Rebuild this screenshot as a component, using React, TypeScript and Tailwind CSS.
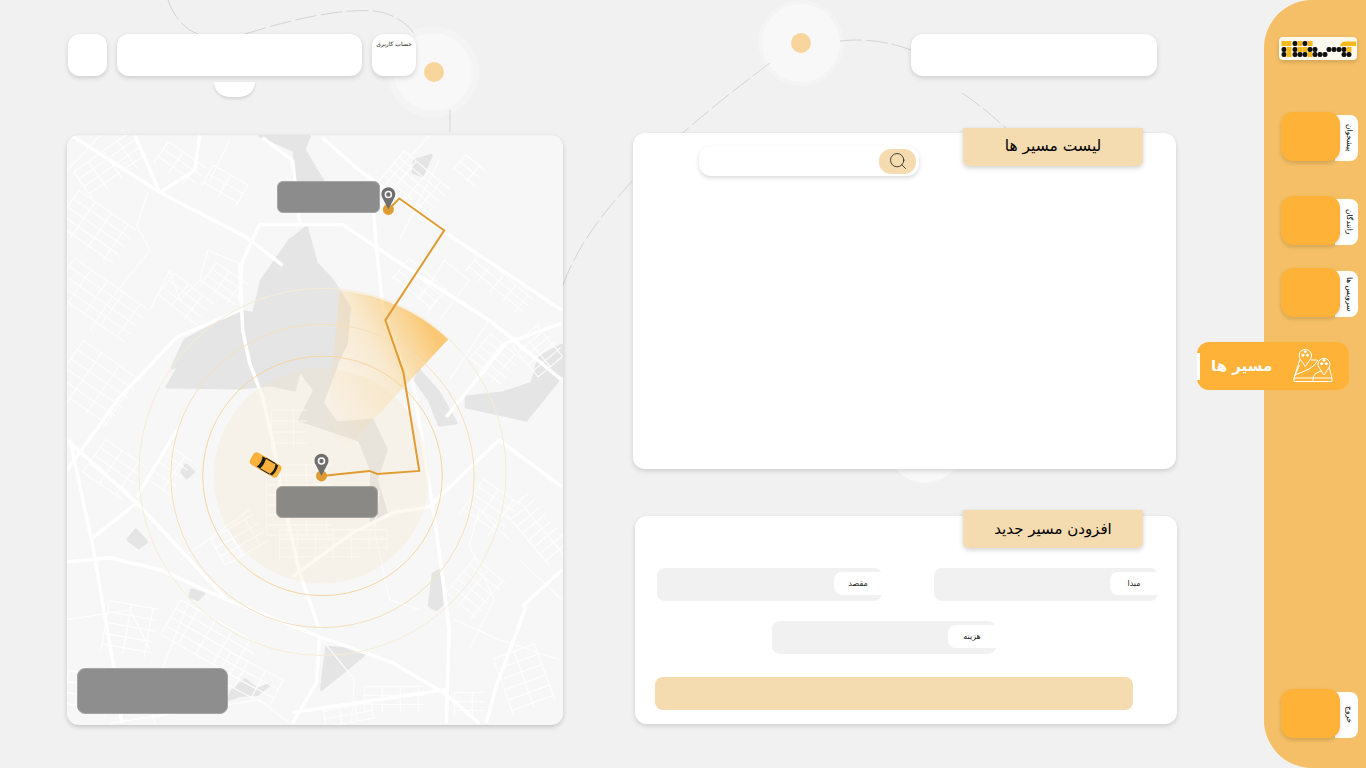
import React from "react";
import { Search } from "lucide-react";

const mainRoads = [
  "M67 132 L160 192 L247 237 L283 265",
  "M323 137 L360 170 L443 230 L563 310",
  "M377 247 L427 280 L490 320 L563 380",
  "M240 300 L242 263 L260 224 L343 224 L377 247",
  "M263 137 L293 160 L300 224",
  "M373 197 L377 247 L383 303 L402 360 L413 380 L423 440 L437 530 L450 630 L447 724",
  "M240 263 L243 330 L250 363 L263 397 L273 440 L283 497 L300 573 L320 630",
  "M240 310 L177 337 L120 397 L67 470",
  "M67 562 L110 558 L160 570 L227 600 L320 637 L393 663 L447 695 L480 724",
  "M70 440 L93 547 L113 663 L122 724",
  "M293 577 L353 533 L393 513 L430 507 L500 440 L563 487",
  "M527 607 L497 687 L487 724",
  "M523 607 L563 570",
  "M320 637 L317 683 L293 724",
  "M67 440 L137 503 L227 600",
  "M137 503 L90 540",
  "M137 497 L177 430",
  "M293 713 L447 690",
  "M447 417 L507 343 L563 323",
  "M160 192 L135 135",
  "M160 192 L195 170 L200 135",
];

const minorRoads = [
  "M100 135 L67 170",
  "M210 180 L230 140",
  "M148 192 L137 225 L150 250 L110 300 L90 330",
  "M240 263 L208 250 L200 280 L230 300",
  "M200 280 L180 300 L170 270 L150 310",
  "M430 135 L380 190",
  "M440 160 L400 240",
  "M450 380 L490 320 L520 340",
  "M420 300 L445 260 L470 280 L440 320",
  "M510 540 L480 510 L470 545 L495 600 L470 650",
  "M563 600 L520 560",
  "M190 600 L150 700 L155 724",
  "M380 490 L375 530 L390 600 L420 610",
  "M180 560 L250 510",
  "M67 620 L130 610 L150 650",
  "M320 637 L355 680 L352 724",
  "M560 660 L500 640 L455 620",
  "M110 724 L260 700 L290 724",
];

// x, y, angle, width, height, step
const streetBlocks: number[][] = [
  [112, 165, -35, 70, 34, 9],
  [180, 165, 35, 46, 26, 9],
  [95, 228, 35, 70, 44, 10],
  [100, 300, 35, 90, 40, 10],
  [185, 300, 38, 50, 30, 9],
  [95, 385, 35, 70, 60, 11],
  [225, 285, 35, 40, 28, 8],
  [225, 185, 30, 40, 24, 10],
  [415, 185, 40, 60, 40, 8],
  [420, 285, 40, 50, 28, 8],
  [500, 285, 40, 70, 22, 8],
  [495, 360, 40, 40, 36, 8],
  [540, 350, -40, 36, 40, 8],
  [470, 170, 40, 26, 20, 9],
  [300, 500, 0, 66, 70, 10],
  [290, 430, 0, 36, 40, 11],
  [320, 545, 0, 80, 30, 9],
  [240, 540, -30, 50, 30, 10],
  [115, 470, 35, 50, 40, 10],
  [170, 470, 35, 30, 40, 10],
  [210, 640, 30, 90, 40, 10],
  [130, 630, 10, 50, 50, 11],
  [250, 680, 28, 60, 30, 10],
  [395, 700, 0, 60, 26, 9],
  [370, 540, 0, 36, 20, 9],
  [490, 510, 35, 44, 44, 9],
  [540, 530, -40, 30, 70, 9],
  [475, 590, 40, 40, 50, 9],
  [525, 680, -20, 44, 60, 11],
  [470, 705, 0, 30, 24, 9],
  [350, 715, -10, 50, 16, 8],
  [90, 695, 10, 50, 40, 11],
];

const water = [
  "M307 227 L317 263 L333 280 L350 307 L347 343 L338 362 L323 403 L337 423 L373 420 L387 450 L377 480 L387 513 L372 522 L372 470 L360 440 L330 430 L300 420 L315 390 L300 370 L295 390 L272 385 L240 388 L167 387 L180 365 L172 368 L185 340 L240 311 L254 313 L262 280 L290 240 Z",
  "M260 135 L295 150 L296 170 L310 135 Z",
  "M296 135 L325 183 L300 205 L294 175 Z",
  "M420 370 L440 393 L457 423 L440 425 L430 400 L416 380 Z",
  "M467 407 L527 420 L557 383 L563 375 L563 345 L540 357 L533 383 L503 393 L467 397 Z",
  "M327 648 L358 650 L365 655 L322 690 Z",
  "M232 692 L245 680 L258 690 L270 685 L258 695 L240 696 L228 700 Z",
  "M415 160 L432 155 L423 175 L414 172 Z",
  "M430 606 L437 610 L443 605 L441 570 L434 574 Z",
  "M136 530 L147 542 L139 548 L128 540 Z",
  "M192 590 L204 594 L198 600 L190 597 Z",
  "M186 465 L194 472 L187 478 L182 472 Z",
];

const logoDots: [number, number, string][] = [
  [5, 6.5, "#f5b819"], [10, 6.5, "#f5b819"], [16, 6.5, "#111"], [21, 6.5, "#f5b819"], [26, 6.5, "#111"], [31, 6.5, "#f5b819"],
  [5, 12.5, "#111"], [10, 12.5, "#f5b819"], [16, 12.5, "#111"], [21, 12.5, "#f5b819"], [26, 12.5, "#f5b819"], [31, 12.5, "#111"],
  [36, 12.5, "#111"], [50, 12.5, "#111"], [55, 12.5, "#111"], [60, 12.5, "#111"], [65, 12.5, "#111"], [70, 12.5, "#f5b819"],
  [5, 17.5, "#111"], [10, 17.5, "#f5b819"], [16, 17.5, "#111"], [21, 17.5, "#111"], [26, 17.5, "#111"], [31, 17.5, "#f5b819"],
  [36, 17.5, "#111"], [41, 17.5, "#111"], [46, 17.5, "#111"], [65, 17.5, "#111"], [70, 17.5, "#111"],
];

const Logo = () => (
  <svg width="78" height="23" viewBox="0 0 78 23">
    {logoDots.map(([x, y, c], i) => (
      <rect key={i} x={x - 2.5} y={y - 2.5} width="5" height="5" rx={c === "#111" ? 2.2 : 0.6} fill={c} />
    ))}
    <path d="M61 9 Q62 4.500 66 4.500 L77 4.500 L77 9 Z" fill="#f5b819" />
  </svg>
);

const RouteIcon = () => (
  <svg width="40" height="36" viewBox="0 0 40 36" fill="none" stroke="#fff" strokeWidth="1">
    <path d="M1 30 L7 11 M6.500 17 L1 30 M39 30 L35 15 M18 12 L24 12 M1 30 H39 V33.500 H1 Z" />
    <path d="M1.500 27 Q10 24 16 21 Q22 18 25 12" />
    <path d="M20 33 V29 Q21 25 28 23" />
    <path d="M12.300 18.500 L7.500 11.500 A6.200 6.200 0 1 1 17.100 11.500 Z" fill="#ffb238" />
    <path d="M31 27 L26.300 20 A6 6 0 1 1 35.700 20 Z" fill="#ffb238" />
    <path d="M12.300 5 a1.300 1.300 0 1 1 .01 0 M10 8.500 a1.300 1.300 0 1 1 .01 0 M14.600 8.500 a1.300 1.300 0 1 1 .01 0" fill="#fff" strokeWidth=".5" />
    <path d="M31 13.500 a1.300 1.300 0 1 1 .01 0 M28.700 17 a1.300 1.300 0 1 1 .01 0 M33.300 17 a1.300 1.300 0 1 1 .01 0" fill="#fff" strokeWidth=".5" />
  </svg>
);

const Pin = ({ x, y }: { x: number; y: number }) => (
  <g>
    <circle cx={x} cy={y + 12} r="5.500" fill="#e09c33" />
    <path
      d={`M${x} ${y + 12} L${x - 5.600} ${y + 1} A7 7 0 1 1 ${x + 5.600} ${y + 1} Z`}
      fill="#6f6f6f"
    />
    <circle cx={x} cy={y - 3} r="3" fill="none" stroke="#fff" strokeWidth="1.500" />
  </g>
);

const MapDrawing = () => (
  <svg className="w-full h-full block" viewBox="67 135 497 590">
    <defs>
      <linearGradient id="sweep" gradientUnits="userSpaceOnUse" x1="320" y1="410" x2="440" y2="345">
        <stop offset="0" stopColor="#fbd38c" stopOpacity="0" />
        <stop offset=".55" stopColor="#fbd38c" stopOpacity=".35" />
        <stop offset="1" stopColor="#fac66e" stopOpacity=".95" />
      </linearGradient>
    </defs>
    <rect x="67" y="135" width="497" height="590" fill="#f7f7f7" />
    <g fill="#e5e5e5" stroke="#e5e5e5" strokeWidth="3" strokeLinejoin="round">
      {water.map((d) => (
        <path key={d} d={d} />
      ))}
    </g>
    <g fill="none" stroke="#fff" strokeWidth="1.200" opacity=".85">
      {minorRoads.map((d) => (
        <path key={d} d={d} />
      ))}
      {streetBlocks.map(([x, y, a, w, h, s], i) => (
        <g key={i} transform={`translate(${x} ${y}) rotate(${a})`}>
          {Array.from({ length: Math.floor(h / s) + 1 }).map((_, r) => (
            <line key={r} x1={-w / 2} x2={w / 2} y1={-h / 2 + r * s} y2={-h / 2 + r * s} />
          ))}
          {Array.from({ length: Math.floor(w / (s * 2)) + 1 }).map((_, c) => (
            <line key={c} y1={-h / 2} y2={h / 2} x1={-w / 2 + c * s * 2} x2={-w / 2 + c * s * 2} />
          ))}
        </g>
      ))}
    </g>
    <g fill="none" stroke="#fff" strokeWidth="3.500" strokeLinejoin="round">
      {mainRoads.map((d) => (
        <path key={d} d={d} />
      ))}
    </g>
    <circle cx="322" cy="476" r="108" fill="#f8dfb5" fillOpacity=".2" />
    <path d="M322 476 L449 339 A187 187 0 0 0 340 290 Z" fill="url(#sweep)" />
    <circle cx="323" cy="476" r="120" fill="none" stroke="#f6d5a2" strokeWidth="1" />
    <circle cx="323" cy="476" r="152" fill="none" stroke="#f6dfbb" strokeWidth="1" />
    <circle cx="323" cy="472" r="184" fill="none" stroke="#f7ebd6" strokeWidth="1" />
    <polyline
      points="389,209 400,198 445,230 386,320 404,372 420,471 378,474 370,471 322,476"
      fill="none"
      stroke="#e09c33"
      strokeWidth="2"
    />
    <Pin x={389} y={197} />
    <Pin x={322} y={464} />
    <g transform="translate(266 465) rotate(30)">
      <rect x="-16" y="-7" width="32" height="14" rx="4" fill="#f7b13c" />
      <path d="M-7 -6 Q-4 0 -7 6 L-3 6 Q-1 0 -3 -6 Z M8 -6 Q11 0 8 6 L11 6 Q13 0 11 -6 Z" fill="#1c1c1c" />
      <path d="M-3 -6 H8 M-3 6 H8" stroke="#1c1c1c" strokeWidth="1" />
    </g>
  </svg>
);

const Backdrop = () => (
  <svg className="absolute inset-0" width="1366" height="768" fill="none">
    <circle cx="433" cy="72" r="46" fill="#f4f4f4" />
    <circle cx="433" cy="72" r="39" fill="#f8f8f8" />
    <circle cx="434" cy="72" r="10" fill="#f7d59d" />
    <circle cx="801" cy="43" r="43" fill="#f4f4f4" />
    <circle cx="801" cy="43" r="39" fill="#f8f8f8" />
    <circle cx="801" cy="43" r="10" fill="#f7d59d" />
    <circle cx="925" cy="445" r="38" fill="#f8f8f8" />
    <g stroke="#d4d4d4" strokeWidth="1" strokeDasharray="22 4">
      <path d="M168 0 C174 18 186 30 198 34" />
      <path d="M245 34 C290 20 340 8 375 11 C395 14 408 24 416 36" />
      <path d="M450 110 V135" />
      <path d="M563 285 C585 225 640 160 770 63" />
      <path d="M840 41 C865 38 890 42 911 50" />
      <path d="M962 93 C980 105 995 118 1008 130" />
    </g>
  </svg>
);

const NavItem = ({ label, className = "" }: { label: string; className?: string }) => (
  <div className={`flex h-[49px] w-[77px] ${className}`}>
    <div className="relative z-10 w-[59px] h-full rounded-xl bg-[#ffb238] shadow-[0_2px_4px_rgba(0,0,0,0.15)]" />
    <div className="-ml-[5px] mt-[3px] h-[46px] w-[23px] rounded-r-lg bg-white flex items-center justify-center pl-[5px]">
      <span className="[writing-mode:vertical-rl] text-[7.500px] leading-none text-black whitespace-nowrap">{label}</span>
    </div>
  </div>
);

const Sidebar = () => (
  <aside className="relative w-[102px] h-[768px] shrink-0 rounded-l-[48px] bg-[#f4bf66] flex flex-col pl-[15px] pt-[37px] pb-[30px]">
    <div className="h-[23px] w-[78px] rounded bg-[#fdf9ef] shadow-[0_2px_4px_rgba(0,0,0,0.15)]">
      <Logo />
    </div>
    <NavItem label="پیشخوان" className="mt-[52px] ml-[2px]" />
    <NavItem label="رانندگان" className="mt-[35px] ml-[2px]" />
    <NavItem label="سرویس ها" className="mt-[23px] ml-[2px]" />
    <div className="relative -ml-[82px] mt-[25px] h-[48px] w-[152px] rounded-xl bg-[#ffb238] flex items-center pl-[14px] pr-[16px] justify-between">
      <span className="absolute left-0 top-[11px] h-[27px] w-[3px] bg-white" />
      <span className="text-white text-[15px] font-bold leading-none">مسیر ها</span>
      <RouteIcon />
    </div>
    <NavItem label="خروج" className="mt-auto ml-[2px]" />
  </aside>
);

const Field = ({ label, className = "" }: { label: string; className?: string }) => (
  <div className={`h-[33px] w-[224px] rounded-lg bg-[#f1f1f1] flex justify-end items-start pt-[4px] ${className}`}>
    <div className="h-[23px] w-[48px] rounded-l-lg bg-white flex items-center justify-center text-[8px] text-[#222]">
      {label}
    </div>
  </div>
);

const Title = ({ children, className = "" }: { children: string; className?: string }) => (
  <div className={`absolute h-[38px] w-[180px] rounded-b-md bg-[#f4dbb0] shadow-[0_2px_5px_rgba(0,0,0,0.18)] flex items-center justify-center text-black ${className}`}>
    {children}
  </div>
);

export default function App() {
  return (
    <div className="relative flex h-[768px] w-[1366px] overflow-hidden bg-[#f1f1f1] font-['DejaVu_Sans',sans-serif]">
      <Backdrop />
      <main className="relative flex-1 flex gap-[70px] pl-[67px] pt-[34px]">
        <section className="w-[496px] shrink-0">
          <div className="flex gap-[10px] h-[42px] pl-[1px]">
            <div className="w-[39px] rounded-xl bg-white shadow-[0_2px_5px_rgba(0,0,0,0.15)]" />
            <div className="w-[245px] rounded-xl bg-white shadow-[0_2px_5px_rgba(0,0,0,0.15)]" />
            <div className="w-[44px] rounded-xl bg-white shadow-[0_2px_5px_rgba(0,0,0,0.15)] pt-[5px] text-center text-[6px] text-[#222] whitespace-nowrap">
              حساب کاربری
            </div>
          </div>
          <div className="ml-[147px] mt-[6px] h-[15px] w-[41px] rounded-b-2xl bg-white shadow-[0_2px_3px_rgba(0,0,0,0.12)]" />
          <div className="relative mt-[38px] h-[590px] overflow-hidden rounded-xl shadow-[0_2px_5px_rgba(0,0,0,0.18)]">
            <MapDrawing />
            <div className="absolute left-[210px] top-[46px] h-[32px] w-[103px] rounded-md border border-[#a5a5a5] bg-[#8c8c8c]" />
            <div className="absolute left-[209px] top-[351px] h-[32px] w-[102px] rounded-md border border-[#a5a5a0] bg-[#8b8985]" />
            <div className="absolute left-[10px] top-[533px] h-[46px] w-[151px] rounded-lg border border-[#a5a5a5] bg-[#8e8e8e]" />
          </div>
        </section>
        <section className="w-[544px] shrink-0">
          <div className="ml-[278px] h-[42px] w-[246px] rounded-xl bg-white shadow-[0_2px_5px_rgba(0,0,0,0.15)]" />
          <div className="relative mt-[57px] h-[336px] w-[543px] rounded-xl bg-white shadow-[0_2px_5px_rgba(0,0,0,0.15)]">
            <Title className="-top-[5px] left-[330px] text-[15.500px]">لیست مسیر ها</Title>
            <div className="absolute left-[66px] top-[13px] flex h-[30px] w-[220px] items-center justify-end rounded-xl bg-white pr-[3px] shadow-[0_2px_4px_rgba(0,0,0,0.15)]">
              <div className="flex h-[25px] w-[37px] items-center justify-center rounded-xl bg-[#f4dbb0]">
                <Search size={20} strokeWidth={1} color="#222" />
              </div>
            </div>
          </div>
          <div className="relative ml-[2px] mt-[47px] h-[208px] w-[542px] rounded-xl bg-white pl-[22px] pt-[52px] shadow-[0_2px_5px_rgba(0,0,0,0.15)]">
            <Title className="-top-[6px] left-[328px] text-[15px]">افزودن مسیر جدید</Title>
            <div className="flex gap-[52px]">
              <Field label="مقصد" className="w-[225px]" />
              <Field label="مبدا" />
            </div>
            <Field label="هزینه" className="ml-[115px] mt-[20px]" />
            <div className="-ml-[2px] mt-[23px] h-[33px] w-[478px] rounded-lg bg-[#f4dbb0]" />
          </div>
        </section>
      </main>
      <Sidebar />
    </div>
  );
}
